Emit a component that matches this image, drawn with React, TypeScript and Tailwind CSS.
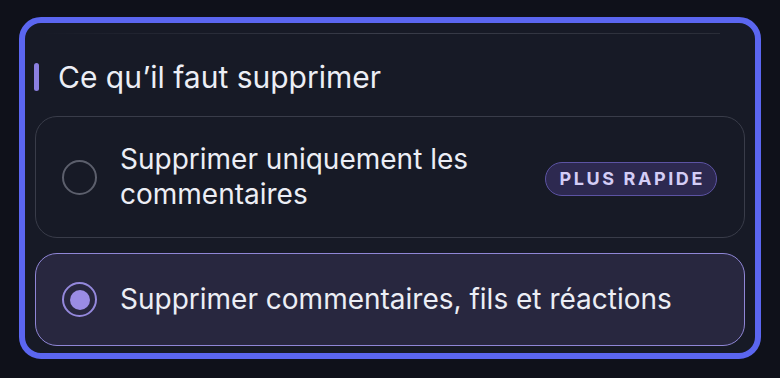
const font = { fontFamily: "Inter, 'Noto Sans', sans-serif" };

function Radio({ checked }: { checked: boolean }) {
  if (checked) {
    return (
      <span className="flex h-[35px] w-[35px] shrink-0 items-center justify-center rounded-full border-2 border-[#9488dc]">
        <span className="h-[20px] w-[20px] rounded-full bg-[#9a8ce4]" />
      </span>
    );
  }
  return <span className="h-[35px] w-[35px] shrink-0 rounded-full border-2 border-[#5c5f6c]" />;
}

export default function App() {
  return (
    <div className="h-[378px] w-[780px] bg-[#0f111a] px-[19px] pt-[17px]" style={font}>
      <div className="flex h-[342px] flex-col rounded-[22px] border-[6px] border-[#5b66f0] bg-[#171a26] px-[10px] pb-[7px]">
        <div className="ml-[6px] mr-[25px] mt-[10px] h-px bg-gradient-to-r from-transparent via-[#3a3d4a] to-[#2a2d38]" />

        <div className="mt-[28px] mb-[24px] flex h-[30px] items-center">
          <span className="-ml-px h-[28px] w-[5px] rounded-full bg-[#8b7fe0]" />
          <h2 className="ml-[19px] text-[30px] leading-none text-[#eceef5]">Ce qu’il faut supprimer</h2>
        </div>

        <div className="flex h-[122px] items-center rounded-[22px] border-[1.5px] border-[#393c49] bg-[#171a26] pl-[26px] pr-[27px]">
          <Radio checked={false} />
          <p className="ml-[23px] flex-1 text-[28px] leading-[35px] text-[#eceef5]">
            Supprimer uniquement les
            <br />
            commentaires
          </p>
          <span className="mt-[3px] flex h-[34px] items-center rounded-full border-[1.5px] border-[#5c53a3] bg-[#2d2950] pl-[14px] pr-[11px] text-[18px] font-bold tracking-[0.144em] text-[#d4cdf6]">
            PLUS RAPIDE
          </span>
        </div>

        <div className="mt-[15px] flex h-[93px] items-center rounded-[22px] border-[1.5px] border-[#8f86d6] bg-[#28273f] pl-[26px] pr-[27px]">
          <Radio checked />
          <p className="ml-[23px] text-[28px] leading-[35px] text-[#eceef5]">
            Supprimer commentaires, fils et réactions
          </p>
        </div>
      </div>
    </div>
  );
}
